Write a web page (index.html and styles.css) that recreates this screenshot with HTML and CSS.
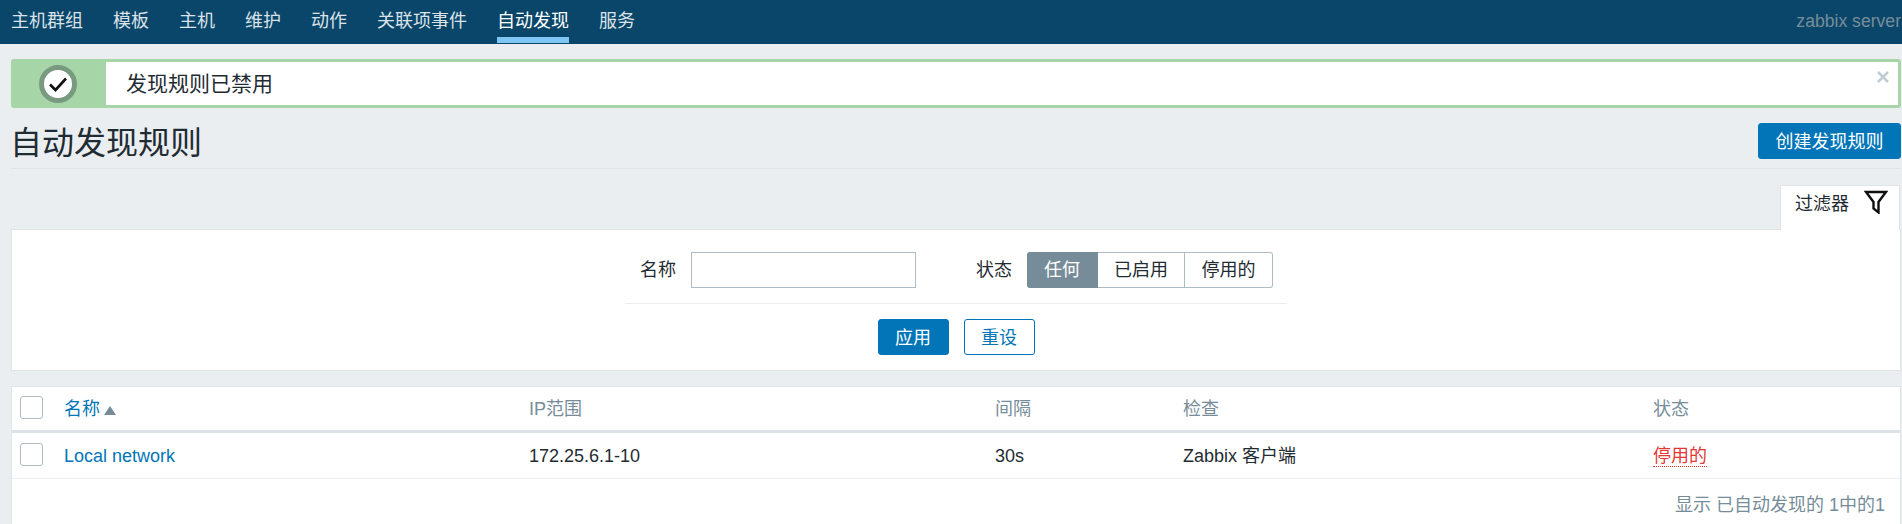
FILE: index.html
```html
<!DOCTYPE html>
<html>
<head>
    <meta charset="utf-8">
    <title>自动发现规则</title>
    <link rel="stylesheet" href="styles.css">
</head>
<body>
    <header class="topnav">
        <ul class="menu">
            <li>主机群组</li>
            <li>模板</li>
            <li>主机</li>
            <li>维护</li>
            <li>动作</li>
            <li>关联项事件</li>
            <li class="selected">自动发现</li>
            <li>服务</li>
        </ul>
        <div class="server">zabbix server</div>
    </header>

    <main class="wrapper">
        <div class="msg">
            <div class="msg-icon">
                <svg width="38" height="38" viewBox="0 0 38 38">
                    <circle cx="19" cy="19" r="16.5" fill="#fff" stroke="#7a9a80" stroke-width="5"/>
                    <path d="M11 19.5 L16.5 25 L27 13.5" fill="none" stroke="#111" stroke-width="2.6"/>
                </svg>
            </div>
            <div class="msg-text">发现规则已禁用</div>
            <svg class="msg-close" width="12" height="12" viewBox="0 0 12 12">
                <path d="M1 1 L11 11 M11 1 L1 11" fill="none" stroke="#c0ccd3" stroke-width="2.5"/>
            </svg>
        </div>

        <div class="title-row">
            <h1>自动发现规则</h1>
            <button class="btn btn-create">创建发现规则</button>
        </div>

        <div class="filter-tabs">
            <div class="filter-tab">
                过滤器
                <svg width="24" height="24" viewBox="0 0 24 24">
                    <path d="M2 2 H22 L14.5 12 V22.5 L9.5 18.5 V12 Z" fill="none" stroke="#111" stroke-width="2.4"/>
                </svg>
            </div>
        </div>

        <section class="filter">
            <div class="filter-fields">
                <label class="field-label">名称</label>
                <input class="field-input" type="text">
                <label class="field-label status-label">状态</label>
                <div class="segments">
                    <span class="seg seg-on seg-any">任何</span>
                    <span class="seg seg-enabled">已启用</span>
                    <span class="seg seg-disabled">停用的</span>
                </div>
            </div>
            <div class="filter-actions">
                <button class="btn btn-apply">应用</button>
                <button class="btn btn-reset">重设</button>
            </div>
        </section>

        <section class="list">
            <div class="row row-head">
                <div class="cell-check"><span class="checkbox"></span></div>
                <div class="cell-name"><a class="link">名称</a><span class="sort-arrow"></span></div>
                <div class="cell-ip">IP范围</div>
                <div class="cell-delay">间隔</div>
                <div class="cell-checks">检查</div>
                <div class="cell-status">状态</div>
            </div>
            <div class="row row-body">
                <div class="cell-check"><span class="checkbox"></span></div>
                <div class="cell-name"><a class="link">Local network</a></div>
                <div class="cell-ip">172.25.6.1-10</div>
                <div class="cell-delay">30s</div>
                <div class="cell-checks">Zabbix 客户端</div>
                <div class="cell-status"><span class="disabled">停用的</span></div>
            </div>
            <div class="paging">显示 已自动发现的 1中的1</div>
        </section>
    </main>
</body>
</html>
```

FILE: styles.css
```css
html, body {
    margin: 0;
    height: 524px;
    overflow: hidden;
}

body {
    background: #ebeef0;
    color: #1f2c33;
    font-family: "Liberation Sans", "Noto Sans CJK SC", sans-serif;
    font-size: 18px;
}

.topnav {
    display: flex;
    justify-content: space-between;
    height: 44px;
    background: #0a466a;
}

.menu {
    display: flex;
    gap: 30px;
    list-style: none;
    margin: 0;
    padding: 0 0 0 11px;
}

.menu li {
    height: 37px;
    line-height: 43px;
    color: #dbe3e8;
}

.menu .selected {
    color: #fff;
    border-bottom: 6px solid #7fc6f5;
}

.server {
    line-height: 43px;
    color: #768d99;
    font-size: 17.6px;
    padding-right: 1px;
    white-space: nowrap;
}

.wrapper {
    padding: 15px 1px 0 11px;
}

.msg {
    position: relative;
    display: flex;
    height: 49px;
    box-sizing: border-box;
    border: 3px solid #a6d6a8;
    border-radius: 3px;
    background: #fff;
}

.msg-icon {
    display: flex;
    align-items: center;
    justify-content: center;
    box-sizing: border-box;
    width: 92px;
    padding-right: 4px;
    background: #a6d6a8;
}

.msg-text {
    padding-left: 20px;
    font-size: 21px;
    line-height: 43px;
}

.msg-close {
    position: absolute;
    top: 9px;
    right: 9px;
}

.title-row {
    display: flex;
    justify-content: space-between;
    height: 60px;
    border-bottom: 1px solid #dfe4e7;
}

h1 {
    margin: 0 0 0 -1px;
    font-size: 32px;
    font-weight: normal;
    line-height: 70px;
}

.btn {
    box-sizing: border-box;
    height: 36px;
    border: 1px solid #0275b8;
    border-radius: 3px;
    background: #0275b8;
    color: #fff;
    font: inherit;
    padding: 0 0 2px;
}

.btn-create {
    width: 143px;
    margin-top: 15px;
}

.filter-tabs {
    display: flex;
    justify-content: flex-end;
    padding: 16px 1px 0 0;
}

.filter-tab {
    display: flex;
    gap: 15px;
    box-sizing: border-box;
    width: 120px;
    height: 45px;
    padding: 3px 0 0 14px;
    background: #fff;
    border: 1px solid #dfe4e7;
    border-bottom: 0;
    border-radius: 2px 2px 0 0;
    line-height: 30px;
    margin-bottom: -1px;
    position: relative;
}

.filter-tab svg {
    margin-top: 1px;
}

.filter {
    box-sizing: border-box;
    height: 142px;
    background: #fff;
    border: 1px solid #dfe4e7;
}

.filter-fields {
    display: flex;
    align-items: flex-start;
    width: 662px;
    height: 74px;
    box-sizing: border-box;
    margin-left: 613px;
    padding: 22px 0 0 15px;
    border-bottom: 1px solid #ebeef0;
}

.field-label {
    width: 36px;
    line-height: 36px;
}

.field-input {
    box-sizing: border-box;
    width: 225px;
    height: 36px;
    margin: 0 0 0 15px;
    border: 1px solid #acbbc4;
    background: #fff;
}

.status-label {
    margin-left: 60px;
}

.segments {
    display: flex;
    margin-left: 15px;
}

.seg {
    box-sizing: border-box;
    height: 36px;
    line-height: 34px;
    text-align: center;
    border: 1px solid #acbbc4;
    border-left: 0;
}

.seg-any {
    width: 71px;
    border-radius: 3px 0 0 3px;
}

.seg-enabled {
    width: 87px;
}

.seg-disabled {
    width: 88px;
    border-radius: 0 3px 3px 0;
}

.seg-on {
    background: #768d99;
    border-color: #768d99;
    color: #fff;
}

.filter-actions {
    display: flex;
    justify-content: center;
    gap: 15px;
    padding-top: 15px;
}

.btn-apply, .btn-reset {
    width: 71px;
}

.btn-reset {
    background: #fff;
    color: #0275b8;
}

.list {
    margin-top: 15px;
    height: 138px;
    box-sizing: border-box;
    background: #fff;
    border: 1px solid #dfe4e7;
    border-bottom: 0;
}

.row {
    display: grid;
    grid-template-columns: 52px 465px 466px 188px 470px 1fr;
    align-items: center;
    line-height: 20px;
}

.row-head {
    height: 43px;
    border-bottom: 3px solid #dce2e6;
    color: #768d99;
}

.row-body {
    height: 45px;
    border-bottom: 1px solid #ebeef0;
}

.cell-check {
    display: flex;
    padding: 0 0 2px 8px;
}

.checkbox {
    box-sizing: border-box;
    width: 23px;
    height: 23px;
    border: 1px solid #acbbc4;
    border-radius: 3px;
    background: #fff;
}

.link {
    color: #0275b8;
}

.sort-arrow {
    display: inline-block;
    margin-left: 4px;
    border-left: 6px solid transparent;
    border-right: 6px solid transparent;
    border-bottom: 9px solid #768d99;
}

.disabled {
    color: #e33734;
    border-bottom: 1px dotted #e33734;
}

.paging {
    text-align: right;
    color: #768d99;
    line-height: 20px;
    padding: 16px 15px 0 0;
}
```
